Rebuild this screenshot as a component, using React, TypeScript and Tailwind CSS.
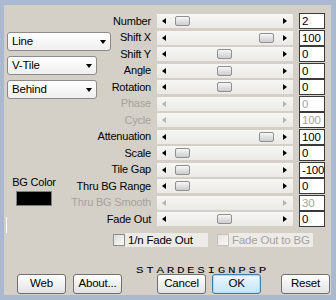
import React from "react";

type Row = { label: string; value: string; row: string; thumb?: string; dis?: boolean };

const rows: Row[] = [
  { label: "Number", value: "2", row: "row-start-1", thumb: "left-[18px]" },
  { label: "Shift X", value: "100", row: "row-start-2", thumb: "left-[102px]" },
  { label: "Shift Y", value: "0", row: "row-start-3", thumb: "left-[60px]" },
  { label: "Angle", value: "0", row: "row-start-4", thumb: "left-[60px]" },
  { label: "Rotation", value: "0", row: "row-start-5", thumb: "left-[60px]" },
  { label: "Phase", value: "0", row: "row-start-6", dis: true },
  { label: "Cycle", value: "100", row: "row-start-7", dis: true },
  { label: "Attenuation", value: "100", row: "row-start-8", thumb: "left-[102px]" },
  { label: "Scale", value: "0", row: "row-start-9", thumb: "left-[18px]" },
  { label: "Tile Gap", value: "-100", row: "row-start-10", thumb: "left-[18px]" },
  { label: "Thru BG Range", value: "0", row: "row-start-11", thumb: "left-[18px]" },
  { label: "Thru BG Smooth", value: "30", row: "row-start-12", dis: true },
  { label: "Fade Out", value: "0", row: "row-start-13", thumb: "left-[60px]" },
];

function Combo({ text, w }: { text: string; w: string }) {
  return (
    <div
      className={`${w} h-[19px] rounded-[3px] border border-[#8b8b8b] bg-linear-to-b from-white to-[#efefef] flex items-center justify-between pl-[4px] pr-[4px] text-[11.5px] text-black`}
    >
      <span>{text}</span>
      <span className="w-0 h-0 border-x-[3.5px] border-x-transparent border-t-[4px] border-t-black" />
    </div>
  );
}

function Btn({ text, ok }: { text: string; ok?: boolean }) {
  return (
    <div
      className={
        ok
          ? "w-[49px] h-[20px] rounded-[3px] border border-[#3c7fb1] bg-linear-to-b from-[#eef8fe] to-[#c2e4f8] flex items-center justify-center text-[11.5px] text-black shadow-[inset_0_0_0_1px_#a9dcf7]"
          : "w-[49px] h-[20px] rounded-[3px] border border-[#707070] bg-linear-to-b from-white to-[#e2e2e2] flex items-center justify-center text-[11.5px] text-black"
      }
    >
      {text}
    </div>
  );
}

export default function App() {
  return (
    <div className="w-[336px] h-[300px] bg-[#aab9d0] pt-[5px] pl-[4px] pr-[5px] pb-[5px] font-['Liberation_Sans',Arial,sans-serif] tracking-[-0.2px]">
      <div className="h-full bg-[#d4d0c8] pt-[8px] flex flex-col">
        <div className="grid grid-cols-[147px_136px_26px] gap-x-[6px] grid-rows-[repeat(13,16.5px)]">
          {rows.map((r) => (
            <React.Fragment key={r.label}>
              <div
                className={`${r.row} col-start-1 self-center justify-self-end text-[11px] leading-[13px] ${
                  r.dis ? "text-[#a5a39c]" : "text-black"
                }`}
              >
                {r.label}
              </div>
              <div
                className={`${r.row} col-start-2 self-center h-[14px] relative bg-linear-to-b from-[#f6f6f4] to-[#ebeae6] flex items-center justify-between pl-[5px] pr-[6px]`}
              >
                <span
                  className={`w-0 h-0 border-y-[3.5px] border-y-transparent border-r-[4px] ${
                    r.dis ? "border-r-[#b5b3ad]" : "border-r-black"
                  }`}
                />
                <span
                  className={`w-0 h-0 border-y-[3.5px] border-y-transparent border-l-[4px] ${
                    r.dis ? "border-l-[#b5b3ad]" : "border-l-black"
                  }`}
                />
                {r.thumb && (
                  <span
                    className={`absolute ${r.thumb} top-[2px] w-[15px] h-[10px] rounded-[2px] border border-[#8f9092] bg-linear-to-b from-[#f7f7f7] to-[#cdcdcd]`}
                  />
                )}
              </div>
              <div
                className={`${r.row} col-start-3 self-center h-[16px] border border-[#3a3a3a] bg-white pl-[2px] text-[11.5px] leading-[14px] ${
                  r.dis ? "text-[#a5a39c]" : "text-black"
                }`}
              >
                {r.value}
              </div>
            </React.Fragment>
          ))}

          <div className="col-start-1 row-start-2 row-span-5 self-start justify-self-start ml-[3px] mt-[2.5px] flex flex-col gap-[5px]">
            <Combo text="Line" w="w-[104px]" />
            <Combo text="V-Tile" w="w-[90px]" />
            <Combo text="Behind" w="w-[90px]" />
          </div>

          <div className="col-start-1 row-start-10 row-span-3 self-start justify-self-start ml-[8px] mt-[14px] w-[44px] flex flex-col items-center">
            <div className="text-[11px] leading-[13px] text-black whitespace-nowrap">BG Color</div>
            <div className="mt-[2px] w-[36px] h-[15px] bg-black border border-[#808080]" />
          </div>

          <div className="col-start-1 row-start-13 self-end justify-self-start ml-[2px] w-px h-[16px] mb-[-5.5px] bg-white" />
        </div>

        <div className="mt-[5px] h-[14px] flex items-center pl-[109px] text-[11.5px]">
          <div className="w-[12px] h-[12px] border border-[#8d8d8d] bg-linear-to-br from-[#dcdcd8] to-[#fafafa]" />
          <div className="w-[83px] h-[14px] bg-[#ecebe8] pl-[3px] leading-[14px] text-black">1/n Fade Out</div>
          <div className="ml-[9px] w-[12px] h-[12px] border border-[#c4c2bc] bg-linear-to-br from-[#e6e5e1] to-[#f8f8f8]" />
          <div className="w-[84px] h-[14px] bg-[#ecebe8] pl-[3px] leading-[14px] text-[#a5a39c]">Fade Out to BG</div>
        </div>

        <div className="mt-[9px] h-[8px] pl-[132px]">
          <div className="inline-block origin-left scale-x-[1.4] font-['Liberation_Mono',monospace] text-[9px] leading-[8px] tracking-[1.9px] text-black whitespace-nowrap">
            STARDESIGNPSP
          </div>
        </div>

        <div className="mt-[10px] flex items-center pl-[13px]">
          <Btn text="Web" />
          <div className="ml-[7px]">
            <Btn text="About..." />
          </div>
          <div className="ml-[35px]">
            <Btn text="Cancel" />
          </div>
          <div className="ml-[6px]">
            <Btn text="OK" ok />
          </div>
          <div className="ml-[20px]">
            <Btn text="Reset" />
          </div>
        </div>
      </div>
    </div>
  );
}
